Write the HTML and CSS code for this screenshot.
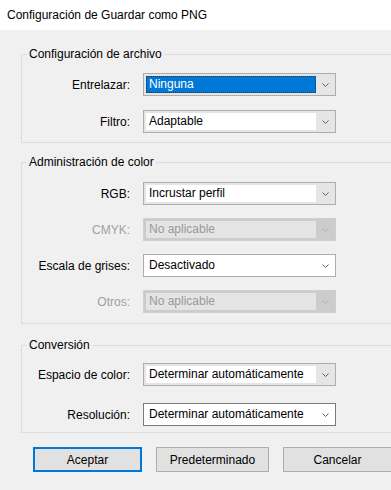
FILE: index.html
```html
<!DOCTYPE html>
<html lang="es">
<head>
  <meta charset="UTF-8" />
  <title>Configuración de Guardar como PNG</title>
  <link rel="stylesheet" href="styles.css">
</head>
<body>

  <!-- barra de titulo -->
  <div class="titlebar">Configuración de Guardar como PNG</div>

  <div class="content">

    <!-- archivo -->
    <fieldset class="group file">
      <legend>Configuración de archivo</legend>
      <div class="rows">
        <label>Entrelazar:</label>
        <div class="combo focus">
          <span class="value">Ninguna</span>
          <span class="arrow"><svg width="7" height="4" viewBox="0 0 7 4"><polyline points="0.5,0.5 3.5,3.5 6.5,0.5"/></svg></span>
        </div>
        <label>Filtro:</label>
        <div class="combo">
          <span class="value">Adaptable</span>
          <span class="arrow"><svg width="7" height="4" viewBox="0 0 7 4"><polyline points="0.5,0.5 3.5,3.5 6.5,0.5"/></svg></span>
        </div>
      </div>
    </fieldset>

    <!-- color -->
    <fieldset class="group color">
      <legend>Administración de color</legend>
      <div class="rows">
        <label>RGB:</label>
        <div class="combo">
          <span class="value">Incrustar perfil</span>
          <span class="arrow"><svg width="7" height="4" viewBox="0 0 7 4"><polyline points="0.5,0.5 3.5,3.5 6.5,0.5"/></svg></span>
        </div>
        <label class="off">CMYK:</label>
        <div class="combo disabled">
          <span class="value">No aplicable</span>
          <span class="arrow"><svg width="7" height="4" viewBox="0 0 7 4"><polyline points="0.5,0.5 3.5,3.5 6.5,0.5"/></svg></span>
        </div>
        <label>Escala de grises:</label>
        <div class="combo plain">
          <span class="value">Desactivado</span>
          <span class="arrow"><svg width="7" height="4" viewBox="0 0 7 4"><polyline points="0.5,0.5 3.5,3.5 6.5,0.5"/></svg></span>
        </div>
        <label class="off">Otros:</label>
        <div class="combo disabled">
          <span class="value">No aplicable</span>
          <span class="arrow"><svg width="7" height="4" viewBox="0 0 7 4"><polyline points="0.5,0.5 3.5,3.5 6.5,0.5"/></svg></span>
        </div>
      </div>
    </fieldset>

    <!-- conversion -->
    <fieldset class="group conv">
      <legend>Conversión</legend>
      <div class="rows">
        <label>Espacio de color:</label>
        <div class="combo">
          <span class="value">Determinar automáticamente</span>
          <span class="arrow"><svg width="7" height="4" viewBox="0 0 7 4"><polyline points="0.5,0.5 3.5,3.5 6.5,0.5"/></svg></span>
        </div>
        <label>Resolución:</label>
        <div class="combo hot">
          <span class="value">Determinar automáticamente</span>
          <span class="arrow"><svg width="7" height="4" viewBox="0 0 7 4"><polyline points="0.5,0.5 3.5,3.5 6.5,0.5"/></svg></span>
        </div>
      </div>
    </fieldset>
  </div>

  <div class="buttons">
    <button class="default">Aceptar</button>
    <button class="wide">Predeterminado</button>
    <button>Cancelar</button>
  </div>

</body>
</html>
```

FILE: styles.css
```css
body {
  margin: 0;
  width: 391px;
  height: 490px;
  overflow: hidden;
  background: #f0f0f0;
  color: #000;
  font-family: "Liberation Sans", Arial, sans-serif;
  font-size: 12px;
}
.titlebar {
  height: 30px;
  line-height: 30px;
  padding-left: 7px;
  background: #fff;
}
.content {
  padding-left: 21px;
  margin-right: -12px;
}
.group {
  margin: 0;
  min-width: 0;
  border: 1px solid #dcdcdc;
  padding: 0;
}
.group legend {
  margin-left: 5px;
  padding: 0 2px;
  height: 16px;
  line-height: 16px;
}
.file {
  margin-top: 16px;
  padding: 11px 0 9px;
}
.file .rows {
  row-gap: 14px;
}
.color {
  margin-top: 11px;
  padding: 12px 0 10px;
}
.conv {
  margin-top: 13px;
  padding: 10px 0 6px;
}
.conv .rows {
  row-gap: 17px;
}
.rows {
  display: grid;
  grid-template-columns: 108px 193px;
  column-gap: 13px;
  row-gap: 13px;
  align-items: center;
}
.rows label {
  text-align: right;
}
.rows label.off {
  color: #a0a0a0;
}
.combo {
  box-sizing: border-box;
  height: 23px;
  display: flex;
  padding: 2px 0 2px 2px;
  border: 1px solid #adadad;
  background: #e5e5e5;
}
.combo .value {
  flex: 1;
  padding-left: 3px;
  line-height: 17px;
  background: #fff;
  white-space: nowrap;
  overflow: hidden;
}
.combo .arrow {
  width: 19px;
  display: flex;
  align-items: center;
  justify-content: center;
}
.combo svg polyline {
  fill: none;
  stroke: #5f5f5f;
  stroke-width: 1;
}
.combo.focus .value {
  background: #0078d7;
  color: #fff;
  outline: 1px dotted #333;
  outline-offset: -1px;
}
.combo.plain,
.combo.hot {
  background: #fff;
}
.combo.hot {
  border-color: #7a7a7a;
}
.combo.disabled {
  border-color: #cfcfcf;
  background: #cccccc;
}
.combo.disabled .value {
  background: #e4e4e4;
  color: #9a9a9a;
}
.combo.disabled svg polyline {
  stroke: #b4b4b4;
}
.buttons {
  display: flex;
  gap: 14px;
  margin-top: 14px;
  padding-left: 33px;
}
.buttons button {
  box-sizing: border-box;
  width: 109px;
  height: 25px;
  flex-shrink: 0;
  margin: 0;
  padding: 0;
  border: 1px solid #adadad;
  background: #e1e1e1;
  color: #000;
  font-family: inherit;
  font-size: 12px;
}
.buttons button.default {
  border: 2px solid #0078d7;
}
.buttons button.wide {
  width: 113px;
}
```
